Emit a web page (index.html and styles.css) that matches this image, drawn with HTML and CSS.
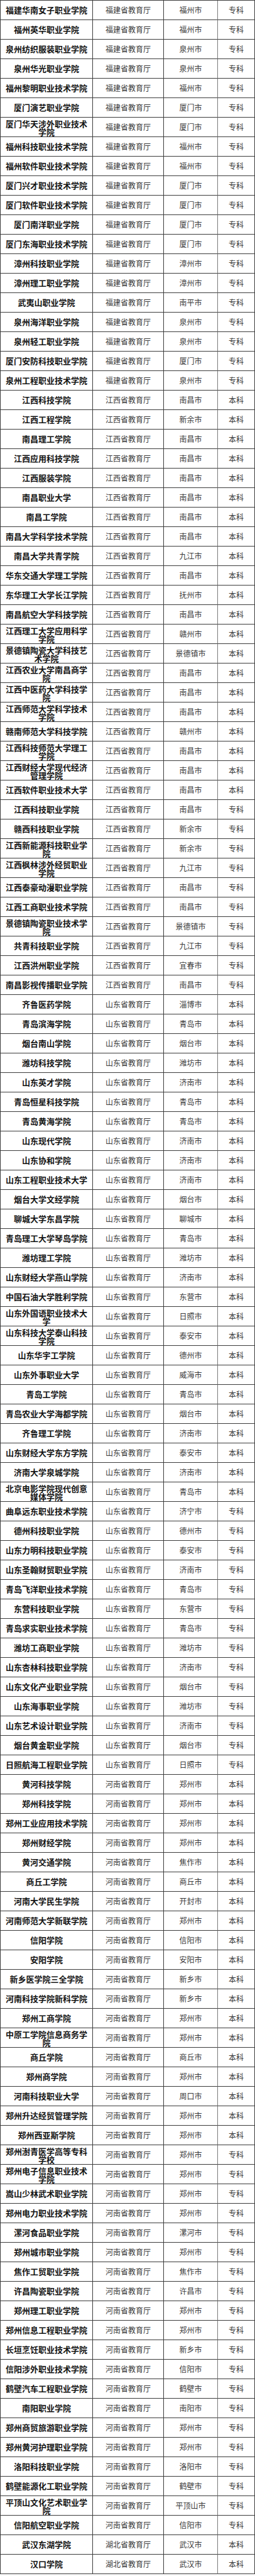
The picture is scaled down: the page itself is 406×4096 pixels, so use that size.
FILE: index.html
```html
<!DOCTYPE html>
<html lang="zh-CN">
<head>
<meta charset="utf-8">
<title>院校名单</title>
<link rel="stylesheet" href="styles.css">
</head>
<body>
<div class="table">
<div class="row"><div class="c name">福建华南女子职业学院</div><div class="c">福建省教育厅</div><div class="c">福州市</div><div class="c lv">专科</div></div>
<div class="row"><div class="c name">福州英华职业学院</div><div class="c">福建省教育厅</div><div class="c">福州市</div><div class="c lv">专科</div></div>
<div class="row"><div class="c name">泉州纺织服装职业学院</div><div class="c">福建省教育厅</div><div class="c">泉州市</div><div class="c lv">专科</div></div>
<div class="row"><div class="c name">泉州华光职业学院</div><div class="c">福建省教育厅</div><div class="c">泉州市</div><div class="c lv">专科</div></div>
<div class="row"><div class="c name">福州黎明职业技术学院</div><div class="c">福建省教育厅</div><div class="c">福州市</div><div class="c lv">专科</div></div>
<div class="row"><div class="c name">厦门演艺职业学院</div><div class="c">福建省教育厅</div><div class="c">厦门市</div><div class="c lv">专科</div></div>
<div class="row"><div class="c name two">厦门华天涉外职业技术学院</div><div class="c">福建省教育厅</div><div class="c">厦门市</div><div class="c lv">专科</div></div>
<div class="row"><div class="c name">福州科技职业技术学院</div><div class="c">福建省教育厅</div><div class="c">福州市</div><div class="c lv">专科</div></div>
<div class="row"><div class="c name">福州软件职业技术学院</div><div class="c">福建省教育厅</div><div class="c">福州市</div><div class="c lv">专科</div></div>
<div class="row"><div class="c name">厦门兴才职业技术学院</div><div class="c">福建省教育厅</div><div class="c">厦门市</div><div class="c lv">专科</div></div>
<div class="row"><div class="c name">厦门软件职业技术学院</div><div class="c">福建省教育厅</div><div class="c">厦门市</div><div class="c lv">专科</div></div>
<div class="row"><div class="c name">厦门南洋职业学院</div><div class="c">福建省教育厅</div><div class="c">厦门市</div><div class="c lv">专科</div></div>
<div class="row"><div class="c name">厦门东海职业技术学院</div><div class="c">福建省教育厅</div><div class="c">厦门市</div><div class="c lv">专科</div></div>
<div class="row"><div class="c name">漳州科技职业学院</div><div class="c">福建省教育厅</div><div class="c">漳州市</div><div class="c lv">专科</div></div>
<div class="row"><div class="c name">漳州理工职业学院</div><div class="c">福建省教育厅</div><div class="c">漳州市</div><div class="c lv">专科</div></div>
<div class="row"><div class="c name">武夷山职业学院</div><div class="c">福建省教育厅</div><div class="c">南平市</div><div class="c lv">专科</div></div>
<div class="row"><div class="c name">泉州海洋职业学院</div><div class="c">福建省教育厅</div><div class="c">泉州市</div><div class="c lv">专科</div></div>
<div class="row"><div class="c name">泉州轻工职业学院</div><div class="c">福建省教育厅</div><div class="c">泉州市</div><div class="c lv">专科</div></div>
<div class="row"><div class="c name">厦门安防科技职业学院</div><div class="c">福建省教育厅</div><div class="c">厦门市</div><div class="c lv">专科</div></div>
<div class="row"><div class="c name">泉州工程职业技术学院</div><div class="c">福建省教育厅</div><div class="c">泉州市</div><div class="c lv">专科</div></div>
<div class="row"><div class="c name">江西科技学院</div><div class="c">江西省教育厅</div><div class="c">南昌市</div><div class="c lv">本科</div></div>
<div class="row"><div class="c name">江西工程学院</div><div class="c">江西省教育厅</div><div class="c">新余市</div><div class="c lv">本科</div></div>
<div class="row"><div class="c name">南昌理工学院</div><div class="c">江西省教育厅</div><div class="c">南昌市</div><div class="c lv">本科</div></div>
<div class="row"><div class="c name">江西应用科技学院</div><div class="c">江西省教育厅</div><div class="c">南昌市</div><div class="c lv">本科</div></div>
<div class="row"><div class="c name">江西服装学院</div><div class="c">江西省教育厅</div><div class="c">南昌市</div><div class="c lv">本科</div></div>
<div class="row"><div class="c name">南昌职业大学</div><div class="c">江西省教育厅</div><div class="c">南昌市</div><div class="c lv">本科</div></div>
<div class="row"><div class="c name">南昌工学院</div><div class="c">江西省教育厅</div><div class="c">南昌市</div><div class="c lv">本科</div></div>
<div class="row"><div class="c name">南昌大学科学技术学院</div><div class="c">江西省教育厅</div><div class="c">南昌市</div><div class="c lv">本科</div></div>
<div class="row"><div class="c name">南昌大学共青学院</div><div class="c">江西省教育厅</div><div class="c">九江市</div><div class="c lv">本科</div></div>
<div class="row"><div class="c name">华东交通大学理工学院</div><div class="c">江西省教育厅</div><div class="c">南昌市</div><div class="c lv">本科</div></div>
<div class="row"><div class="c name">东华理工大学长江学院</div><div class="c">江西省教育厅</div><div class="c">抚州市</div><div class="c lv">本科</div></div>
<div class="row"><div class="c name">南昌航空大学科技学院</div><div class="c">江西省教育厅</div><div class="c">南昌市</div><div class="c lv">本科</div></div>
<div class="row"><div class="c name two">江西理工大学应用科学学院</div><div class="c">江西省教育厅</div><div class="c">赣州市</div><div class="c lv">本科</div></div>
<div class="row"><div class="c name two">景德镇陶瓷大学科技艺术学院</div><div class="c">江西省教育厅</div><div class="c">景德镇市</div><div class="c lv">本科</div></div>
<div class="row"><div class="c name two">江西农业大学南昌商学院</div><div class="c">江西省教育厅</div><div class="c">南昌市</div><div class="c lv">本科</div></div>
<div class="row"><div class="c name two">江西中医药大学科技学院</div><div class="c">江西省教育厅</div><div class="c">南昌市</div><div class="c lv">本科</div></div>
<div class="row"><div class="c name two">江西师范大学科学技术学院</div><div class="c">江西省教育厅</div><div class="c">南昌市</div><div class="c lv">本科</div></div>
<div class="row"><div class="c name">赣南师范大学科技学院</div><div class="c">江西省教育厅</div><div class="c">赣州市</div><div class="c lv">本科</div></div>
<div class="row"><div class="c name two">江西科技师范大学理工学院</div><div class="c">江西省教育厅</div><div class="c">南昌市</div><div class="c lv">本科</div></div>
<div class="row"><div class="c name two">江西财经大学现代经济管理学院</div><div class="c">江西省教育厅</div><div class="c">南昌市</div><div class="c lv">本科</div></div>
<div class="row"><div class="c name">江西软件职业技术大学</div><div class="c">江西省教育厅</div><div class="c">南昌市</div><div class="c lv">本科</div></div>
<div class="row"><div class="c name">江西科技职业学院</div><div class="c">江西省教育厅</div><div class="c">南昌市</div><div class="c lv">专科</div></div>
<div class="row"><div class="c name">赣西科技职业学院</div><div class="c">江西省教育厅</div><div class="c">新余市</div><div class="c lv">专科</div></div>
<div class="row"><div class="c name two">江西新能源科技职业学院</div><div class="c">江西省教育厅</div><div class="c">新余市</div><div class="c lv">专科</div></div>
<div class="row"><div class="c name two">江西枫林涉外经贸职业学院</div><div class="c">江西省教育厅</div><div class="c">九江市</div><div class="c lv">专科</div></div>
<div class="row"><div class="c name">江西泰豪动漫职业学院</div><div class="c">江西省教育厅</div><div class="c">南昌市</div><div class="c lv">专科</div></div>
<div class="row"><div class="c name">江西工商职业技术学院</div><div class="c">江西省教育厅</div><div class="c">南昌市</div><div class="c lv">专科</div></div>
<div class="row"><div class="c name two">景德镇陶瓷职业技术学院</div><div class="c">江西省教育厅</div><div class="c">景德镇市</div><div class="c lv">专科</div></div>
<div class="row"><div class="c name">共青科技职业学院</div><div class="c">江西省教育厅</div><div class="c">九江市</div><div class="c lv">专科</div></div>
<div class="row"><div class="c name">江西洪州职业学院</div><div class="c">江西省教育厅</div><div class="c">宜春市</div><div class="c lv">专科</div></div>
<div class="row"><div class="c name">南昌影视传播职业学院</div><div class="c">江西省教育厅</div><div class="c">南昌市</div><div class="c lv">专科</div></div>
<div class="row"><div class="c name">齐鲁医药学院</div><div class="c">山东省教育厅</div><div class="c">淄博市</div><div class="c lv">本科</div></div>
<div class="row"><div class="c name">青岛滨海学院</div><div class="c">山东省教育厅</div><div class="c">青岛市</div><div class="c lv">本科</div></div>
<div class="row"><div class="c name">烟台南山学院</div><div class="c">山东省教育厅</div><div class="c">烟台市</div><div class="c lv">本科</div></div>
<div class="row"><div class="c name">潍坊科技学院</div><div class="c">山东省教育厅</div><div class="c">潍坊市</div><div class="c lv">本科</div></div>
<div class="row"><div class="c name">山东英才学院</div><div class="c">山东省教育厅</div><div class="c">济南市</div><div class="c lv">本科</div></div>
<div class="row"><div class="c name">青岛恒星科技学院</div><div class="c">山东省教育厅</div><div class="c">青岛市</div><div class="c lv">本科</div></div>
<div class="row"><div class="c name">青岛黄海学院</div><div class="c">山东省教育厅</div><div class="c">青岛市</div><div class="c lv">本科</div></div>
<div class="row"><div class="c name">山东现代学院</div><div class="c">山东省教育厅</div><div class="c">济南市</div><div class="c lv">本科</div></div>
<div class="row"><div class="c name">山东协和学院</div><div class="c">山东省教育厅</div><div class="c">济南市</div><div class="c lv">本科</div></div>
<div class="row"><div class="c name">山东工程职业技术大学</div><div class="c">山东省教育厅</div><div class="c">济南市</div><div class="c lv">本科</div></div>
<div class="row"><div class="c name">烟台大学文经学院</div><div class="c">山东省教育厅</div><div class="c">烟台市</div><div class="c lv">本科</div></div>
<div class="row"><div class="c name">聊城大学东昌学院</div><div class="c">山东省教育厅</div><div class="c">聊城市</div><div class="c lv">本科</div></div>
<div class="row"><div class="c name">青岛理工大学琴岛学院</div><div class="c">山东省教育厅</div><div class="c">青岛市</div><div class="c lv">本科</div></div>
<div class="row"><div class="c name">潍坊理工学院</div><div class="c">山东省教育厅</div><div class="c">潍坊市</div><div class="c lv">本科</div></div>
<div class="row"><div class="c name">山东财经大学燕山学院</div><div class="c">山东省教育厅</div><div class="c">济南市</div><div class="c lv">本科</div></div>
<div class="row"><div class="c name">中国石油大学胜利学院</div><div class="c">山东省教育厅</div><div class="c">东营市</div><div class="c lv">本科</div></div>
<div class="row"><div class="c name two">山东外国语职业技术大学</div><div class="c">山东省教育厅</div><div class="c">日照市</div><div class="c lv">本科</div></div>
<div class="row"><div class="c name two">山东科技大学泰山科技学院</div><div class="c">山东省教育厅</div><div class="c">泰安市</div><div class="c lv">本科</div></div>
<div class="row"><div class="c name">山东华宇工学院</div><div class="c">山东省教育厅</div><div class="c">德州市</div><div class="c lv">本科</div></div>
<div class="row"><div class="c name">山东外事职业大学</div><div class="c">山东省教育厅</div><div class="c">威海市</div><div class="c lv">本科</div></div>
<div class="row"><div class="c name">青岛工学院</div><div class="c">山东省教育厅</div><div class="c">青岛市</div><div class="c lv">本科</div></div>
<div class="row"><div class="c name">青岛农业大学海都学院</div><div class="c">山东省教育厅</div><div class="c">烟台市</div><div class="c lv">本科</div></div>
<div class="row"><div class="c name">齐鲁理工学院</div><div class="c">山东省教育厅</div><div class="c">济南市</div><div class="c lv">本科</div></div>
<div class="row"><div class="c name">山东财经大学东方学院</div><div class="c">山东省教育厅</div><div class="c">泰安市</div><div class="c lv">本科</div></div>
<div class="row"><div class="c name">济南大学泉城学院</div><div class="c">山东省教育厅</div><div class="c">济南市</div><div class="c lv">本科</div></div>
<div class="row"><div class="c name two">北京电影学院现代创意媒体学院</div><div class="c">山东省教育厅</div><div class="c">青岛市</div><div class="c lv">本科</div></div>
<div class="row"><div class="c name">曲阜远东职业技术学院</div><div class="c">山东省教育厅</div><div class="c">济宁市</div><div class="c lv">专科</div></div>
<div class="row"><div class="c name">德州科技职业学院</div><div class="c">山东省教育厅</div><div class="c">德州市</div><div class="c lv">专科</div></div>
<div class="row"><div class="c name">山东力明科技职业学院</div><div class="c">山东省教育厅</div><div class="c">泰安市</div><div class="c lv">专科</div></div>
<div class="row"><div class="c name">山东圣翰财贸职业学院</div><div class="c">山东省教育厅</div><div class="c">济南市</div><div class="c lv">专科</div></div>
<div class="row"><div class="c name">青岛飞洋职业技术学院</div><div class="c">山东省教育厅</div><div class="c">青岛市</div><div class="c lv">专科</div></div>
<div class="row"><div class="c name">东营科技职业学院</div><div class="c">山东省教育厅</div><div class="c">东营市</div><div class="c lv">专科</div></div>
<div class="row"><div class="c name">青岛求实职业技术学院</div><div class="c">山东省教育厅</div><div class="c">青岛市</div><div class="c lv">专科</div></div>
<div class="row"><div class="c name">潍坊工商职业学院</div><div class="c">山东省教育厅</div><div class="c">潍坊市</div><div class="c lv">专科</div></div>
<div class="row"><div class="c name">山东杏林科技职业学院</div><div class="c">山东省教育厅</div><div class="c">济南市</div><div class="c lv">专科</div></div>
<div class="row"><div class="c name">山东文化产业职业学院</div><div class="c">山东省教育厅</div><div class="c">烟台市</div><div class="c lv">专科</div></div>
<div class="row"><div class="c name">山东海事职业学院</div><div class="c">山东省教育厅</div><div class="c">潍坊市</div><div class="c lv">专科</div></div>
<div class="row"><div class="c name">山东艺术设计职业学院</div><div class="c">山东省教育厅</div><div class="c">济南市</div><div class="c lv">专科</div></div>
<div class="row"><div class="c name">烟台黄金职业学院</div><div class="c">山东省教育厅</div><div class="c">烟台市</div><div class="c lv">专科</div></div>
<div class="row"><div class="c name">日照航海工程职业学院</div><div class="c">山东省教育厅</div><div class="c">日照市</div><div class="c lv">专科</div></div>
<div class="row"><div class="c name">黄河科技学院</div><div class="c">河南省教育厅</div><div class="c">郑州市</div><div class="c lv">本科</div></div>
<div class="row"><div class="c name">郑州科技学院</div><div class="c">河南省教育厅</div><div class="c">郑州市</div><div class="c lv">本科</div></div>
<div class="row"><div class="c name">郑州工业应用技术学院</div><div class="c">河南省教育厅</div><div class="c">郑州市</div><div class="c lv">本科</div></div>
<div class="row"><div class="c name">郑州财经学院</div><div class="c">河南省教育厅</div><div class="c">郑州市</div><div class="c lv">本科</div></div>
<div class="row"><div class="c name">黄河交通学院</div><div class="c">河南省教育厅</div><div class="c">焦作市</div><div class="c lv">本科</div></div>
<div class="row"><div class="c name">商丘工学院</div><div class="c">河南省教育厅</div><div class="c">商丘市</div><div class="c lv">本科</div></div>
<div class="row"><div class="c name">河南大学民生学院</div><div class="c">河南省教育厅</div><div class="c">开封市</div><div class="c lv">本科</div></div>
<div class="row"><div class="c name">河南师范大学新联学院</div><div class="c">河南省教育厅</div><div class="c">郑州市</div><div class="c lv">本科</div></div>
<div class="row"><div class="c name">信阳学院</div><div class="c">河南省教育厅</div><div class="c">信阳市</div><div class="c lv">本科</div></div>
<div class="row"><div class="c name">安阳学院</div><div class="c">河南省教育厅</div><div class="c">安阳市</div><div class="c lv">本科</div></div>
<div class="row"><div class="c name">新乡医学院三全学院</div><div class="c">河南省教育厅</div><div class="c">新乡市</div><div class="c lv">本科</div></div>
<div class="row"><div class="c name">河南科技学院新科学院</div><div class="c">河南省教育厅</div><div class="c">新乡市</div><div class="c lv">本科</div></div>
<div class="row"><div class="c name">郑州工商学院</div><div class="c">河南省教育厅</div><div class="c">郑州市</div><div class="c lv">本科</div></div>
<div class="row"><div class="c name two">中原工学院信息商务学院</div><div class="c">河南省教育厅</div><div class="c">郑州市</div><div class="c lv">本科</div></div>
<div class="row"><div class="c name">商丘学院</div><div class="c">河南省教育厅</div><div class="c">商丘市</div><div class="c lv">本科</div></div>
<div class="row"><div class="c name">郑州商学院</div><div class="c">河南省教育厅</div><div class="c">郑州市</div><div class="c lv">本科</div></div>
<div class="row"><div class="c name">河南科技职业大学</div><div class="c">河南省教育厅</div><div class="c">周口市</div><div class="c lv">本科</div></div>
<div class="row"><div class="c name">郑州升达经贸管理学院</div><div class="c">河南省教育厅</div><div class="c">郑州市</div><div class="c lv">本科</div></div>
<div class="row"><div class="c name">郑州西亚斯学院</div><div class="c">河南省教育厅</div><div class="c">郑州市</div><div class="c lv">本科</div></div>
<div class="row"><div class="c name two">郑州澍青医学高等专科学校</div><div class="c">河南省教育厅</div><div class="c">郑州市</div><div class="c lv">专科</div></div>
<div class="row"><div class="c name two">郑州电子信息职业技术学院</div><div class="c">河南省教育厅</div><div class="c">郑州市</div><div class="c lv">专科</div></div>
<div class="row"><div class="c name">嵩山少林武术职业学院</div><div class="c">河南省教育厅</div><div class="c">郑州市</div><div class="c lv">专科</div></div>
<div class="row"><div class="c name">郑州电力职业技术学院</div><div class="c">河南省教育厅</div><div class="c">郑州市</div><div class="c lv">专科</div></div>
<div class="row"><div class="c name">漯河食品职业学院</div><div class="c">河南省教育厅</div><div class="c">漯河市</div><div class="c lv">专科</div></div>
<div class="row"><div class="c name">郑州城市职业学院</div><div class="c">河南省教育厅</div><div class="c">郑州市</div><div class="c lv">专科</div></div>
<div class="row"><div class="c name">焦作工贸职业学院</div><div class="c">河南省教育厅</div><div class="c">焦作市</div><div class="c lv">专科</div></div>
<div class="row"><div class="c name">许昌陶瓷职业学院</div><div class="c">河南省教育厅</div><div class="c">许昌市</div><div class="c lv">专科</div></div>
<div class="row"><div class="c name">郑州理工职业学院</div><div class="c">河南省教育厅</div><div class="c">郑州市</div><div class="c lv">专科</div></div>
<div class="row"><div class="c name">郑州信息工程职业学院</div><div class="c">河南省教育厅</div><div class="c">郑州市</div><div class="c lv">专科</div></div>
<div class="row"><div class="c name">长垣烹饪职业技术学院</div><div class="c">河南省教育厅</div><div class="c">新乡市</div><div class="c lv">专科</div></div>
<div class="row"><div class="c name">信阳涉外职业技术学院</div><div class="c">河南省教育厅</div><div class="c">信阳市</div><div class="c lv">专科</div></div>
<div class="row"><div class="c name">鹤壁汽车工程职业学院</div><div class="c">河南省教育厅</div><div class="c">鹤壁市</div><div class="c lv">专科</div></div>
<div class="row"><div class="c name">南阳职业学院</div><div class="c">河南省教育厅</div><div class="c">南阳市</div><div class="c lv">专科</div></div>
<div class="row"><div class="c name">郑州商贸旅游职业学院</div><div class="c">河南省教育厅</div><div class="c">郑州市</div><div class="c lv">专科</div></div>
<div class="row"><div class="c name">郑州黄河护理职业学院</div><div class="c">河南省教育厅</div><div class="c">郑州市</div><div class="c lv">专科</div></div>
<div class="row"><div class="c name">洛阳科技职业学院</div><div class="c">河南省教育厅</div><div class="c">洛阳市</div><div class="c lv">专科</div></div>
<div class="row"><div class="c name">鹤壁能源化工职业学院</div><div class="c">河南省教育厅</div><div class="c">鹤壁市</div><div class="c lv">专科</div></div>
<div class="row"><div class="c name two">平顶山文化艺术职业学院</div><div class="c">河南省教育厅</div><div class="c">平顶山市</div><div class="c lv">专科</div></div>
<div class="row"><div class="c name">信阳航空职业学院</div><div class="c">河南省教育厅</div><div class="c">信阳市</div><div class="c lv">专科</div></div>
<div class="row"><div class="c name">武汉东湖学院</div><div class="c">湖北省教育厅</div><div class="c">武汉市</div><div class="c lv">本科</div></div>
<div class="row"><div class="c name">汉口学院</div><div class="c">湖北省教育厅</div><div class="c">武汉市</div><div class="c lv">本科</div></div>
</div>
</body>
</html>
```

FILE: styles.css
```css
html, body {
  margin: 0;
  padding: 0;
  background: #ffffff;
}

.table {
  width: 406px;
  box-sizing: border-box;
  border-top: 1px solid #3c3c3c;
  border-left: 1px solid #3c3c3c;
  font-family: "Noto Sans CJK SC", "Noto Sans", sans-serif;
}

.row {
  display: grid;
  grid-template-columns: 147px 113px 86px 59px;
  height: 31px;
}

.c {
  box-sizing: border-box;
  height: 31px;
  border-right: 1px solid #3c3c3c;
  border-bottom: 1px solid #3c3c3c;
  display: flex;
  align-items: center;
  justify-content: center;
  text-align: center;
  font-size: 12px;
  line-height: 14px;
  color: #3a3a3a;
}

.c.name {
  font-size: 13px;
  font-weight: 700;
  color: #141414;
  padding: 0 7px;
}

.c.name.two {
  padding-top: 2px;
  line-height: 13.5px;
}

.row .c:nth-child(3) {
  border-right-color: #7a7a7a;
}
```
